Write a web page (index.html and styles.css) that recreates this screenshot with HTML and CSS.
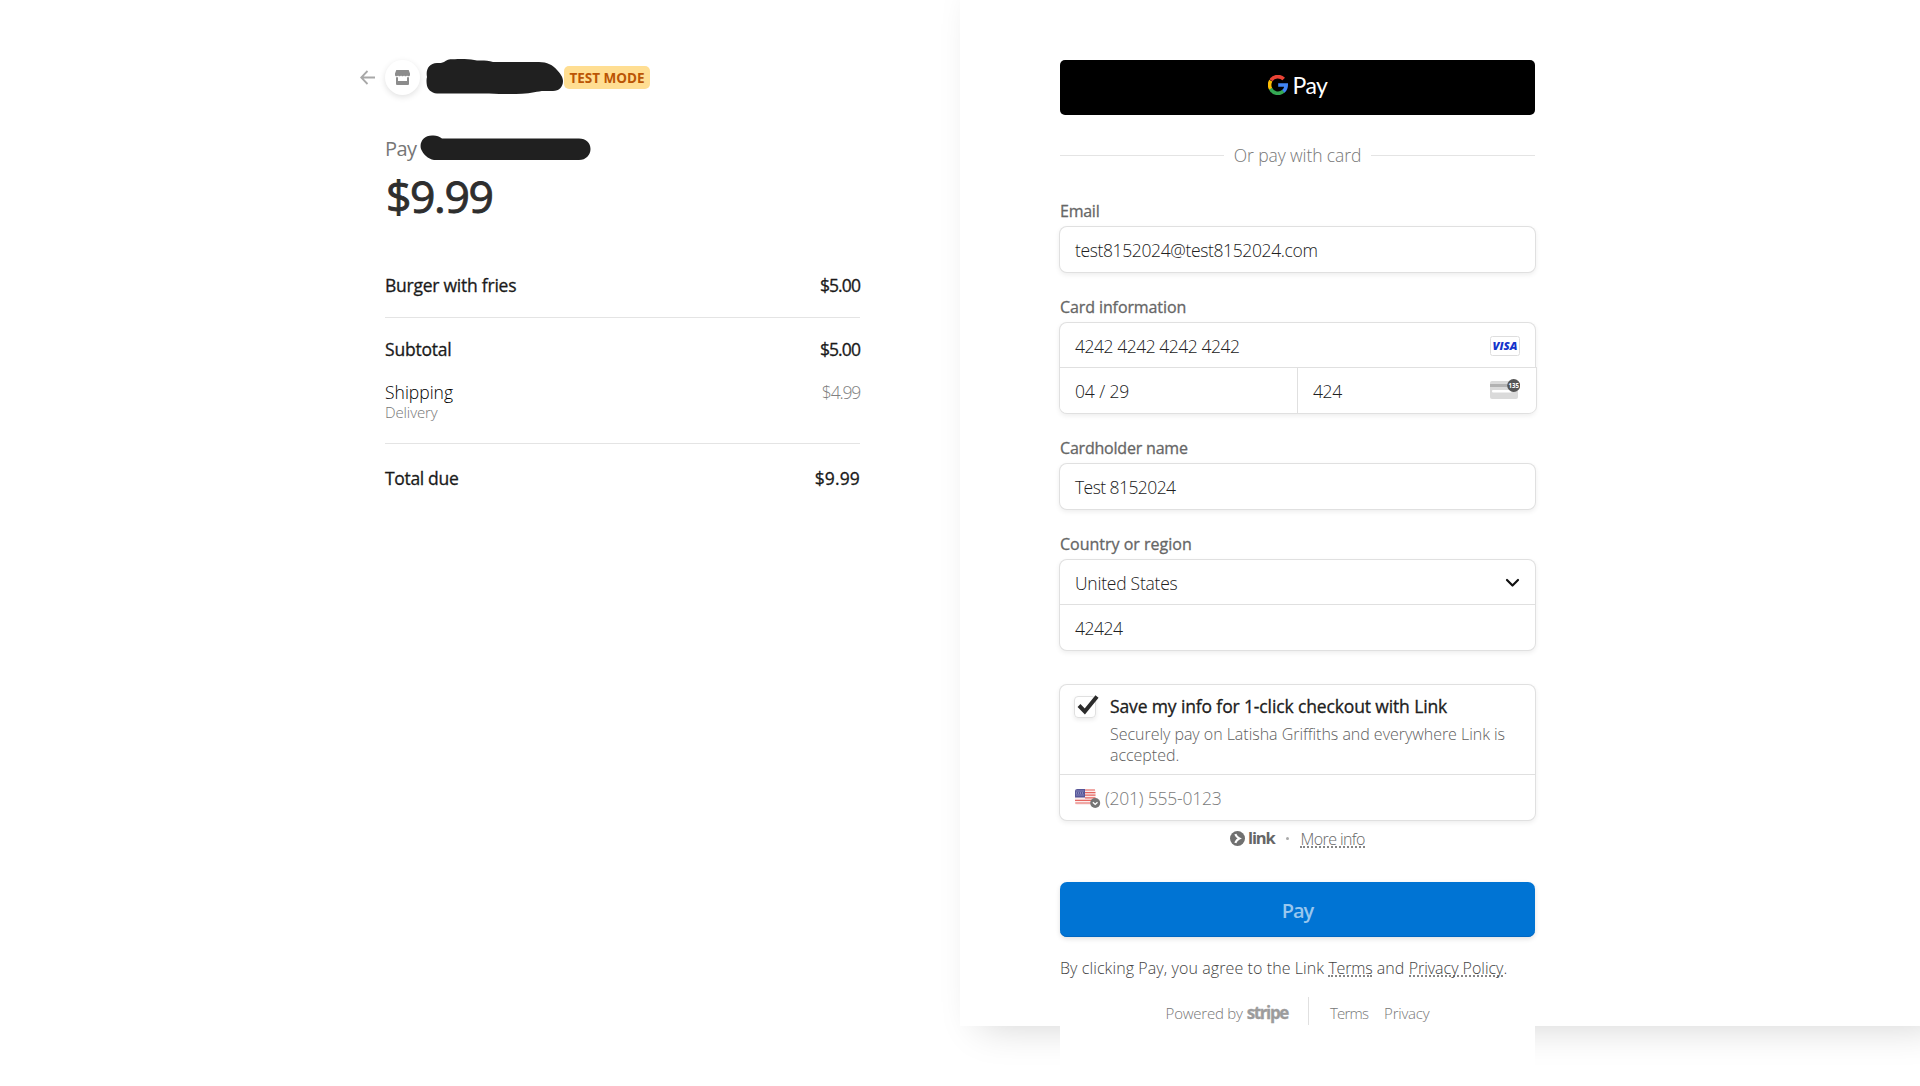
FILE: index.html
```
<!DOCTYPE html>
<html lang="en">
<head>
<meta charset="utf-8">
<title>Checkout</title>
<link rel="stylesheet" href="styles.css">
</head>
<body>
<div class="checkout">
  <section class="summary">
    <header class="brand">
      <svg class="back" width="16" height="16" viewBox="0 0 16 16"><path d="M15 8.500H1.500M7.500 2 1.200 8.500l6.300 6.500" fill="none" stroke="#a8a8a8" stroke-width="1.800"/></svg>
      <span class="store">
        <svg width="15" height="15" viewBox="0 0 15 15"><path d="M1.3 0h12.400L15 3.600V5c0 .8-.7 1.300-1.500 1.300S12 5.700 12 5.300c0 .6-.7 1-1.500 1S9 5.800 9 5.300c0 .6-.7 1-1.500 1S6 5.800 6 5.300c0 .6-.7 1-1.500 1S3 5.800 3 5.300c0 .6-.7 1-1.500 1S0 5.800 0 5V3.600zM1 7.200h2V11h9V7.200h2V14a1 1 0 0 1-1 1H2a1 1 0 0 1-1-1z" fill="#8c8c8c"/></svg>
      </span>
      <svg class="redact-name" width="138" height="36" viewBox="0 0 138 36"><path d="M11 4C14 4 16 4 18 3C21 0 25 0 29 .2C38-.3 45 0 51 1.500C57 1.200 62 1.500 67 3H113C121 3 127 6 131 11C134 14 137 18 137 22C137 28 133 32 127 32H118C112 32 105 34.500 96 34.700C86 35.300 74 35 63 34.500H11C5 34 1 30 .7 25C.4 22 .4 20 1 18C-.5 11 3 4 11 4Z" fill="#202020"/></svg>
      <span class="badge">TEST MODE</span>
    </header>
    <div class="payee"><span>Pay</span>
      <svg width="171" height="26" viewBox="0 0 171 26"><path d="M12 .5C16 .2 19 1 22 3.500H159C166 3.500 170.500 8 170.500 14C170.500 20 166 25 159 25H14C8 24 3 19 1 14C-1 7 4 .5 12 .5Z" fill="#202020"/></svg>
    </div>
    <div class="amount">$9.99</div>
    <div class="row item"><span>Burger with fries</span><span class="price">$5.00</span></div>
    <div class="row subtotal"><span>Subtotal</span><span class="price">$5.00</span></div>
    <div class="row shipping"><span>Shipping</span><span class="price">$4.99</span></div>
    <div class="method">Delivery</div>
    <div class="row total"><span>Total due</span><span>$9.99</span></div>
  </section>

  <div class="side">
  <section class="panel">
    <form class="form">
      <div class="gpay">
        <svg width="20" height="20" viewBox="0 0 20 20" fill="none" stroke-width="3.600"><path d="M3 5.200A8.200 8.200 0 0 1 15.700 4.100" stroke="#ea4335"/><path d="M2.800 14.100a8.200 8.200 0 0 1 0-8.400" stroke="#fbbc04"/><path d="M15.500 16.200A8.200 8.200 0 0 1 2.600 13.700" stroke="#34a853"/><path d="M10.200 10h8q0 4-2.900 6.300" stroke="#4285f4"/></svg>
        <span>Pay</span>
      </div>
      <div class="or"><span>Or pay with card</span></div>

      <div class="label l-email">Email</div>
      <div class="box"><div class="cell t-email">test8152024@test8152024.com</div></div>

      <div class="label">Card information</div>
      <div class="box">
        <div class="cell top"><span class="t-num">4242 4242 4242 4242</span>
          <svg width="30" height="20" viewBox="0 0 30 20"><rect x=".5" y=".5" width="29" height="19" rx="2" fill="#fff" stroke="#dedede"/><text x="2.500" y="14" textLength="25" lengthAdjust="spacingAndGlyphs" class="visa">VISA</text></svg>
        </div>
        <div class="split">
          <div class="cell t-exp">04 / 29</div>
          <div class="cell"><span class="t-cvc">424</span>
            <svg class="cvc" width="30" height="20" viewBox="0 0 30 20"><rect y="2" width="28" height="18" rx="2" fill="#dadada"/><path d="M0 5h28v3H0z" fill="#b2b2b2"/><rect x="2" y="11" width="20" height="2.500" rx="1" fill="#fff"/><circle cx="23.700" cy="6.500" r="6.500" fill="#555"/><text x="18.600" y="9.200" textLength="10.500" lengthAdjust="spacingAndGlyphs" class="cvc-num">135</text></svg>
          </div>
        </div>
      </div>

      <div class="label l-holder">Cardholder name</div>
      <div class="box"><div class="cell t-name">Test 8152024</div></div>

      <div class="label l-country">Country or region</div>
      <div class="box">
        <div class="cell top"><span class="t-country">United States</span>
          <svg width="15" height="10" viewBox="0 0 15 10"><path d="m2 2 5.500 5.500L13 2" fill="none" stroke="#111" stroke-width="2.200" stroke-linecap="round" stroke-linejoin="round"/></svg>
        </div>
        <div class="cell ruled t-num">42424</div>
      </div>

      <div class="box save">
        <div class="consent">
          <span class="check"><svg width="22" height="20" viewBox="0 0 22 20"><path d="M2 10.500 7.800 16.500 20 1.500" fill="none" stroke="#2b2b2b" stroke-width="4"/></svg></span>
          <div>
            <div class="save-title">Save my info for 1-click checkout with Link</div>
            <div class="save-text">Securely pay on Latisha Griffiths and everywhere Link is accepted.</div>
          </div>
        </div>
        <div class="cell ruled phone">
          <svg width="26" height="20" viewBox="0 0 26 20"><g opacity=".9"><rect y="1" width="20.500" height="16" rx="2.500" fill="#fbeaea"/><path d="M10 2h10M10 4.600h10.500M10 7.200h10.500M10 9.800h10.500M0 12.400h20.500M.3 15h19.900" stroke="#e4554f" stroke-width="1.200"/><path d="M2.500 1H10v8.500H0v-6A2.500 2.500 0 0 1 2.500 1z" fill="#45458f"/><path d="M1.500 3h8M1 5h8M1.500 7h8" stroke="#c4c4e4" stroke-width=".8" stroke-dasharray="1 1"/></g><circle cx="20.200" cy="15" r="5" fill="#757575"/><path d="m17.900 14.200 2.300 2.200 2.300-2.200" fill="none" stroke="#fff" stroke-width="1.400"/></svg>
          <span>(201) 555-0123</span>
        </div>
      </div>

      <div class="linkrow">
        <svg width="15" height="15" viewBox="0 0 15 15"><circle cx="7.500" cy="7.500" r="7.500" fill="#707070"/><path d="M5.300 3.200q1.200 3 4 4.300-2.800 1.300-4 4.300" fill="none" stroke="#fff" stroke-width="2.200"/></svg>
        <b>link</b><i></i><a class="more">More info</a>
      </div>

      <div class="submit">Pay</div>
      <p class="terms">By clicking Pay, you agree to the Link <a class="t-terms">Terms</a> and <a>Privacy Policy</a>.</p>
      <footer class="footer">
        <span class="powered">Powered by</span><b>stripe</b><span class="links"><span class="f-terms">Terms</span><span>Privacy</span></span>
      </footer>
    </form>
  </section>
  </div>
</div>
</body>
</html>
```
FILE: styles.css
```
* { box-sizing: border-box; }
body {
  margin: 0;
  background: #fff;
  color: #1a1a1a;
  font: 300 17.5px/24px "Open Sans", "Noto Sans", sans-serif;
}
svg { display: block; flex: none; }
.checkout { display: flex; height: 1086px; overflow: hidden; }

/* Order summary */
.summary { width: 960px; padding: 59px 100px 0 385px; }
.brand { display: flex; align-items: center; height: 36px; margin-left: -25px; }
.back { margin-right: 9px; }
.store {
  display: flex; align-items: center; justify-content: center;
  width: 35px; height: 35px; border-radius: 50%; background: #fff;
  box-shadow: 0 2px 6px rgba(0, 0, 0, .12);
}
.redact-name { margin-left: 6px; }
.badge {
  width: 86px; height: 23px; border-radius: 5px;
  background: #ffde92; color: #bb5504; text-align: center;
  font: 700 13.5px/24px "Open Sans", sans-serif;
}
.payee {
  display: flex; height: 26px; margin-top: 40px;
  color: #767676; font-size: 20px; font-weight: 400; line-height: 27px; letter-spacing: -.6px;
}
.payee span { width: 35px; }
.amount {
  margin-top: 5px; font-size: 44.5px; line-height: 60px; font-weight: 400;
  -webkit-text-stroke: .9px currentColor; letter-spacing: -1.4px; color: #2e2e2e; padding-left: 1px;
}
.row { display: flex; justify-content: space-between; font-weight: 400; -webkit-text-stroke: .3px currentColor; }
.item { margin-top: 47px; height: 45px; border-bottom: 1px solid #e4e4e4; letter-spacing: -.24px; }
.price { letter-spacing: -.9px; }
.subtotal { margin-top: 19px; letter-spacing: -.2px; }
.shipping { margin-top: 19px; height: 21px; font-weight: 300; -webkit-text-stroke: 0; color: #000; }
.shipping .price { color: #808080; letter-spacing: -1.2px; }
.method { height: 43px; border-bottom: 1px solid #e4e4e4; font-size: 15px; line-height: 22px; letter-spacing: -.12px; color: #777; }
.total { margin-top: 22px; letter-spacing: -.33px; }
.total span + span { letter-spacing: .15px; }

/* Payment panel */
.side { width: 960px; }
.panel {
  height: 1026px; padding: 60px 385px 0 100px; background: #fff;
  box-shadow: 18.75px 0 37.5px rgba(0, 0, 0, .18);
}
.form { height: 1026px; background: #fff; }
.gpay { display: flex; justify-content: center; height: 55px; padding-top: 15px; border-radius: 5px; background: #000; color: #fff; }
.gpay span { margin-left: 5px; font: 400 23px/20px Lato, sans-serif; letter-spacing: -.5px; }
.or { display: flex; align-items: center; gap: 10px; margin-top: 28px; letter-spacing: -.1px; color: #777; }
.or::before, .or::after { content: ""; flex: 1; height: 1px; background: #e4e4e4; }
.label {
  margin: 25px 0 6px; height: 20px; font-size: 16px; line-height: 21px; font-weight: 400;
  -webkit-text-stroke: .3px currentColor; letter-spacing: -.1px; color: #666;
}
.or + .label { margin-top: 34px; }
.l-email { letter-spacing: -.25px; }
.l-holder { letter-spacing: -.2px; }
.l-country { letter-spacing: 0; }
.box {
  border-radius: 7px; background: #fff; color: #202020;
  box-shadow: 0 0 0 1px #e0e0e0, 0 2px 5px 1px rgba(0, 0, 0, .07);
}
.cell { display: flex; align-items: center; justify-content: space-between; height: 45px; padding: 1px 15px 0; }
.cell.top { height: 44px; }
.cell.ruled { height: 46px; border-top: 1px solid #e0e0e0; }
.split {
  display: grid; grid-template-columns: 237px 1fr; margin-right: -1px;
  border-top: 1px solid #e0e0e0; border-radius: 0 0 7px 7px; background: #fff;
  box-shadow: 1px 0 0 #e0e0e0;
}
.split .cell + .cell { padding-right: 16px; border-left: 1px solid #e0e0e0; }
.t-email { letter-spacing: -.37px; }
.t-num { letter-spacing: -.47px; }
.t-exp { letter-spacing: -.12px; }
.t-cvc { letter-spacing: -.38px; }
.t-name { letter-spacing: -.56px; }
.t-country { letter-spacing: -.24px; }
.cvc { margin-top: -4px; }
.visa { font: italic 800 11px "Open Sans", sans-serif; fill: #1434cb; }
.cvc-num { font: 700 7.5px "Open Sans", sans-serif; fill: #fff; }
.save { margin-top: 35px; }
.consent { display: flex; height: 89px; padding: 9px 14px 0; }
.check { width: 22px; height: 22px; margin: 2px 14px 0 0; border: 1px solid #e0e0e0; border-radius: 4px; box-shadow: 0 2px 4px rgba(0, 0, 0, .08); }
.check svg { margin: -2px 0 0 2px; }
.save-title { font-weight: 400; -webkit-text-stroke: .3px currentColor; letter-spacing: -.13px; white-space: nowrap; }
.save-text { width: 415px; margin-top: 6px; font-size: 16px; line-height: 21px; letter-spacing: -.03px; color: #606060; }
.cell.phone { justify-content: flex-start; gap: 4px; letter-spacing: -.22px; color: #7a7a7a; }
.linkrow { display: flex; align-items: center; justify-content: center; height: 22px; margin-top: 7px; color: #666; font-size: 16px; }
.linkrow b { margin-left: 3px; font: 700 16.5px/22px "Open Sans", sans-serif; letter-spacing: -1.2px; }
.linkrow i { width: 3px; height: 3px; margin: 0 11px 0 12px; border-radius: 50%; background: #aaa; }
.more, .terms a { display: inline-block; height: 19px; line-height: 20px; border-bottom: 2px dotted #858585; }
.more { letter-spacing: -.57px; }
.submit {
  height: 55px; margin-top: 33px; border-radius: 7px; background: #0074d4;
  color: #99c7ee; font: 600 20px/57px "Open Sans", sans-serif; letter-spacing: -1px; text-align: center;
  box-shadow: inset 0 -1px 0 #0067c2, 0 2px 5px rgba(0, 0, 0, .12);
}
.terms { margin: 19px 0 0; height: 24px; font-size: 16px; letter-spacing: .09px; color: #444; white-space: nowrap; }
.terms .t-terms { letter-spacing: -.2px; }
.terms a + a { letter-spacing: -.02px; }
.footer { display: flex; justify-content: center; height: 28px; margin-top: 17px; font-size: 15px; line-height: 32px; letter-spacing: -.22px; color: #777; }
.footer b { margin: 0 20px 0 4px; font: 700 17px/32px "Open Sans", sans-serif; -webkit-text-stroke: .3px currentColor; letter-spacing: -1.4px; color: #9c9c9c; }
.links { display: flex; gap: 16px; padding-left: 21px; border-left: 1px solid #e0e0e0; }
.f-terms { letter-spacing: -.8px; }
```
